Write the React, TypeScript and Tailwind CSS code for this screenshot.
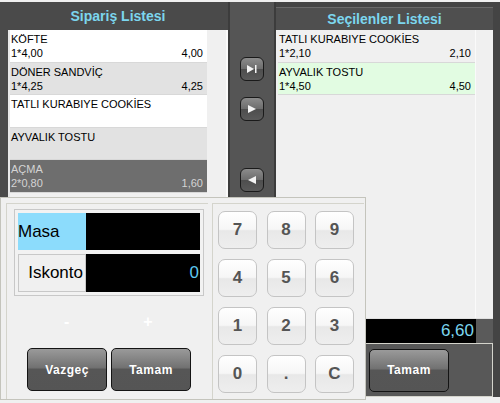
import React from 'react';

const font = { fontFamily: '"Liberation Sans", Arial, sans-serif' };

type Item = { name: string; qty?: string; total?: string; tone: 'white' | 'gray' | 'dark' | 'light' | 'green' };

const orders: Item[] = [
  { name: 'KÖFTE', qty: '1*4,00', total: '4,00', tone: 'white' },
  { name: 'DÖNER SANDVİÇ', qty: '1*4,25', total: '4,25', tone: 'gray' },
  { name: 'TATLI KURABIYE COOKİES', tone: 'white' },
  { name: 'AYVALIK TOSTU', tone: 'gray' },
  { name: 'AÇMA', qty: '2*0,80', total: '1,60', tone: 'dark' },
];

const selected: Item[] = [
  { name: 'TATLI KURABIYE COOKİES', qty: '1*2,10', total: '2,10', tone: 'light' },
  { name: 'AYVALIK TOSTU', qty: '1*4,50', total: '4,50', tone: 'green' },
];

const toneClass = {
  white: 'bg-white text-black',
  gray: 'bg-[#e2e2e2] text-black',
  dark: 'bg-[#6e6e6e] text-[#d4d4d4]',
  light: 'bg-[#f0f0f0] text-black',
  green: 'bg-[#e2fce2] text-black',
};

function Row({ item }: { item: Item }) {
  return (
    <div className={`h-[32.5px] px-[1px] pt-[2px] text-[11px] leading-[14px] border-b border-[#d8d8d8] ${toneClass[item.tone]}`}>
      <div>{item.name}</div>
      <div className="flex justify-between pr-[3px]">
        <span>{item.qty}</span>
        <span>{item.total}</span>
      </div>
    </div>
  );
}

function ArrowBtn({ kind }: { kind: 'end' | 'next' | 'back' }) {
  return (
    <div className="w-[24px] h-[24px] rounded-[6px] border border-[#1a1a1a] bg-[linear-gradient(#8c8c8c_0%,#6c6c6c_50%,#4e4e4e_52%,#5a5a5a_100%)] flex items-center justify-center">
      <svg width="12" height="10" viewBox="0 0 12 10">
        {kind === 'end' && (
          <>
            <polygon points="1,1 8,5 1,9" fill="#f4f4f4" />
            <rect x="9" y="1" width="1.5" height="8" fill="#f4f4f4" />
          </>
        )}
        {kind === 'next' && <polygon points="2,1 10,5 2,9" fill="#f4f4f4" />}
        {kind === 'back' && <polygon points="10,1 2,5 10,9" fill="#f4f4f4" />}
      </svg>
    </div>
  );
}

function DarkBtn({ label, className = '' }: { label: string; className?: string }) {
  return (
    <div
      className={`h-[43px] rounded-[5px] border border-[#141414] bg-[linear-gradient(#9a9a9a_0%,#727272_45%,#565656_50%,#555_100%)] flex items-center justify-center text-white text-[12px] font-bold tracking-[0.5px] ${className}`}
    >
      {label}
    </div>
  );
}

function Key({ label }: { label: string }) {
  return (
    <div className="w-[39px] h-[38px] rounded-[7px] border border-[#c4c4c4] bg-[linear-gradient(#ffffff_0%,#f6f6f6_48%,#e8e8e8_52%,#eeeeee_100%)] flex items-center justify-center text-[17px] font-bold text-[#555]">
      {label}
    </div>
  );
}

export default function App() {
  return (
    <div className="relative w-[500px] h-[403px] overflow-hidden bg-[#f0f0f0] pt-[2px]" style={font}>
      {/* background window */}
      <div className="flex h-[395px] bg-[#444]">
        {/* Sipariş Listesi */}
        <div className="w-[228px] flex flex-col pl-[8px] pt-[1px] bg-[#4a4a4a]">
          <div className="h-[27px] flex items-center justify-center text-[14px] font-bold text-[#7cd6ee]">
            Sipariş Listesi
          </div>
          <div className="flex-1 flex bg-[#f0f0f0] border-l-2 border-[#e8e8e8]">
            <div className="w-[197px]">
              {orders.map((o) => (
                <Row key={o.name} item={o} />
              ))}
            </div>
            <div className="flex-1 border-r-2 border-[#fafafa]" />
          </div>
        </div>

        {/* middle buttons */}
        <div className="w-[48px] bg-[#555] border-x-2 border-[#3c3c3c] flex flex-col items-center pt-[55px]">
          <ArrowBtn kind="end" />
          <div className="h-[16px]" />
          <ArrowBtn kind="next" />
          <div className="h-[47px]" />
          <ArrowBtn kind="back" />
        </div>

        {/* Seçilenler Listesi */}
        <div className="flex-1 flex flex-col pt-[5px] pr-[7px] bg-[#444]">
          <div className="h-[23px] border-t border-[#6a6a6a] bg-[#4f4f4f] flex items-center justify-center text-[14px] font-bold text-[#7cd6ee]">
            Seçilenler Listesi
          </div>
          <div className="h-[288px] flex bg-[#f0f0f0] pl-[2px]">
            <div className="w-[197px]">
              {selected.map((o) => (
                <Row key={o.name} item={o} />
              ))}
            </div>
            <div className="flex-1 border-l border-[#fafafa]" />
          </div>
          <div className="h-[25px] flex border-t border-[#e0e0e0]">
            <div className="flex-1 bg-black flex items-center justify-end pr-[2px] text-[17px] text-[#7cd6ee]">6,60</div>
            <div className="w-[17px] bg-[#5a5a5a]" />
          </div>
          <div className="flex-1 bg-[#585858] border border-[#d4d4cc] flex items-center pl-[92px]">
            <DarkBtn label="Tamam" className="w-[80px]" />
          </div>
        </div>
      </div>

      {/* dialog over the lists */}
      <div className="absolute left-0 top-[197px] w-[366px] h-[203px] bg-[#f0f0f0] border border-[#c4c4bc] flex pt-[5px] pl-[5px] pr-[1px] gap-[4px]">
        <div className="w-[202px] border-l border-t border-[#d4d4cc] flex flex-col pl-[7px] pt-[5px]">
          <div className="w-[190px] border border-[#c8c8c8] p-[3px] flex flex-col gap-[4px] bg-[#f2f2f2]">
            <div className="flex h-[37px]">
              <div className="w-[68px] bg-[#8cdcfc] flex items-center text-[17px] text-black">Masa</div>
              <div className="flex-1 bg-black" />
            </div>
            <div className="flex h-[38px]">
              <div className="w-[68px] border border-[#c8c8c8] bg-[#f0f0f0] flex items-center justify-end pr-[2px] text-[17px] text-black">
                Iskonto
              </div>
              <div className="flex-1 bg-black flex items-center justify-end pr-[1px] text-[17px] text-[#5ec8f0]">0</div>
            </div>
          </div>
          <div className="flex h-[52px] items-center pl-[50px] gap-[74px] text-[16px] font-bold text-white">
            <span>-</span>
            <span>+</span>
          </div>
          <div className="flex gap-[4px] pl-[13px]">
            <DarkBtn label="Vazgeç" className="w-[80px]" />
            <DarkBtn label="Tamam" className="w-[80px]" />
          </div>
        </div>
        <div className="flex-1 border-l border-t border-[#d4d4cc] grid grid-cols-[39px_39px_39px] gap-x-[9.5px] gap-y-[10px] content-start pl-[5px] pt-[7px]">
          {['7', '8', '9', '4', '5', '6', '1', '2', '3', '0', '.', 'C'].map((k) => (
            <Key key={k} label={k} />
          ))}
        </div>
      </div>
    </div>
  );
}
